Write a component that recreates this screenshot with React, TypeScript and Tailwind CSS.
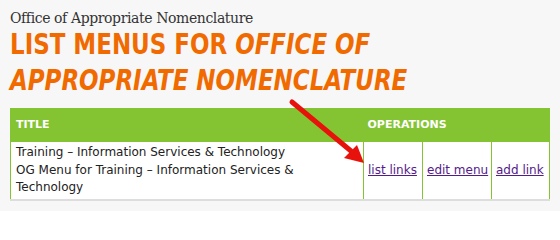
export default function App(): JSX.Element {
  return (
    <div className="relative w-[560px] h-[211px] bg-[#f7f7f7] px-[10px] pt-[9px] overflow-hidden">
      <div className="text-[14px] leading-[18px] text-[#333] font-['DejaVu_Serif',serif] tracking-[-0.4px]">
        Office of Appropriate Nomenclature
      </div>
      <h1 className="-mt-[1px] origin-left scale-x-[0.88] whitespace-nowrap text-[29px] leading-[36px] font-bold uppercase text-[#f06a00] font-['DejaVu_Sans_Condensed','DejaVu_Sans',sans-serif]">
        List menus for <em className="italic">Office of</em>
        <br />
        <em className="italic">Appropriate Nomenclature</em>
      </h1>

      <table className="mt-[10px] w-[539px] table-fixed border-collapse font-['DejaVu_Sans',sans-serif] border-b-2 border-b-[#dddddd]">
        <colgroup>
          <col className="w-[353px]" />
          <col className="w-[59px]" />
          <col className="w-[69px]" />
          <col className="w-[58px]" />
        </colgroup>
        <thead>
          <tr className="bg-[#84c433] text-white h-[34px] text-[11px]">
            <th className="px-[5px] text-left font-bold uppercase border-l border-[#84c433]">Title</th>
            <th colSpan={3} className="px-[4px] text-left font-bold uppercase border-r border-[#84c433]">Operations</th>
          </tr>
        </thead>
        <tbody>
          <tr className="bg-white h-[57px] text-[#222] text-[12px] leading-[17.5px]">
            <td className="px-[5px] py-[2px] border-l border-r border-[#84c433] align-top">
              Training – Information Services &amp; Technology
              <br />
              OG Menu for Training – Information Services &amp; Technology
            </td>
            <td className="px-[4px] border-r border-[#84c433] whitespace-nowrap">
              <a href="#" className="underline text-[#551a8b]">list links</a>
            </td>
            <td className="px-[4px] border-r border-[#84c433] whitespace-nowrap">
              <a href="#" className="underline text-[#551a8b]">edit menu</a>
            </td>
            <td className="px-[4px] border-r border-[#84c433] whitespace-nowrap">
              <a href="#" className="underline text-[#551a8b]">add link</a>
            </td>
          </tr>
        </tbody>
      </table>

      <svg className="absolute left-0 top-0 pointer-events-none" width="560" height="211" viewBox="0 0 560 211">
        <line x1="292" y1="102" x2="351" y2="151" stroke="#e8120c" strokeWidth="5" strokeLinecap="round" />
        <polygon points="364,163 344,158 357,145" fill="#e8120c" />
      </svg>
    </div>
  )
}
